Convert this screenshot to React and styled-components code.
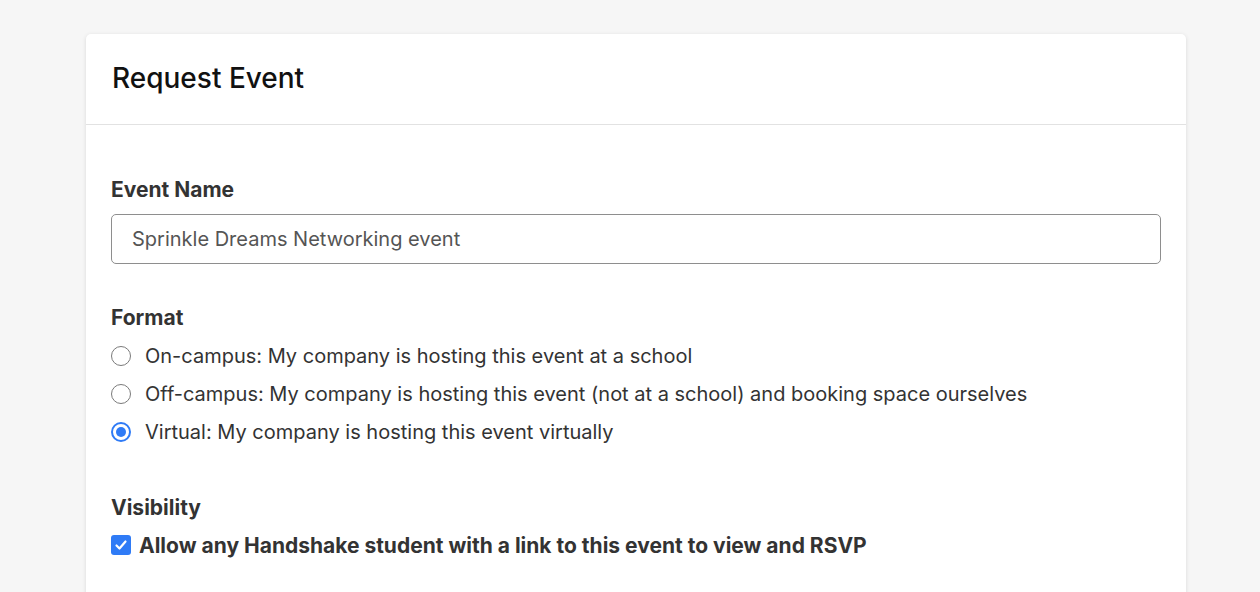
import React from "react";
import styled, { createGlobalStyle } from "styled-components";

const GlobalStyle = createGlobalStyle`
  body {
    margin: 0;
    background: #f6f6f6;
    font-family: Inter, "Noto Sans", sans-serif;
    color: #333;
  }
`;

const Page = styled.div`
  padding: 34px 74px 0 86px;
  min-height: 100vh;
  box-sizing: border-box;
`;

const Card = styled.div`
  width: 1100px;
  background: #fff;
  border-radius: 5px;
  box-shadow: 0 1px 4px rgba(0, 0, 0, 0.12);
  overflow: hidden;
`;

const Header = styled.div`
  height: 91px;
  display: flex;
  align-items: center;
  padding: 0 26px 2px;
  box-sizing: border-box;
  border-bottom: 1px solid #e2e2e2;
`;

const Title = styled.h1`
  margin: 0;
  font-size: 28px;
  font-weight: 500;
  color: #111;
`;

const Body = styled.div`
  padding: 53px 25px 40px;
  display: flex;
  flex-direction: column;
`;

const Field = styled.div`
  display: flex;
  flex-direction: column;
  margin-bottom: ${(p) => p.gap || 0}px;
`;

const Label = styled.div`
  font-size: 21px;
  line-height: 24px;
  font-weight: 700;
  color: #333;
  margin-bottom: ${(p) => p.space || 0}px;
`;

const TextInput = styled.input`
  height: 50px;
  box-sizing: border-box;
  border: 1px solid #8e8e8e;
  border-radius: 5px;
  padding: 0 20px;
  font-family: inherit;
  font-size: 20px;
  color: #555;
  outline: none;
`;

const OptionRow = styled.label`
  display: flex;
  align-items: center;
  height: 38px;
  font-size: 20px;
  color: #333;
`;

const RadioDot = styled.span`
  width: 20px;
  height: 20px;
  box-sizing: border-box;
  border-radius: 50%;
  border: ${(p) => (p.checked ? "2px solid #2f7bf6" : "1.5px solid #7a7a7a")};
  margin-right: 14px;
  display: flex;
  align-items: center;
  justify-content: center;
  &::after {
    content: "";
    width: 10px;
    height: 10px;
    border-radius: 50%;
    background: ${(p) => (p.checked ? "#2f7bf6" : "transparent")};
  }
`;

const CheckRow = styled.label`
  display: flex;
  align-items: center;
  height: 24px;
  margin-top: 13px;
  font-size: 21px;
  font-weight: 700;
  color: #333;
`;

const CheckBox = styled.span`
  width: 20px;
  height: 20px;
  border-radius: 3px;
  background: #2f7bf6;
  margin-right: 8px;
  display: flex;
  align-items: center;
  justify-content: center;
`;

const formats = [
  { label: "On-campus: My company is hosting this event at a school", checked: false },
  {
    label:
      "Off-campus: My company is hosting this event (not at a school) and booking space ourselves",
    checked: false,
  },
  { label: "Virtual: My company is hosting this event virtually", checked: true },
];

export default function App() {
  return (
    <>
      <GlobalStyle />
      <Page>
        <Card>
          <Header>
            <Title>Request Event</Title>
          </Header>
          <Body>
            <Field gap={42}>
              <Label space={12}>Event Name</Label>
              <TextInput defaultValue="Sprinkle Dreams Networking event" />
            </Field>
            <Field gap={45}>
              <Label space={7}>Format</Label>
              {formats.map((f) => (
                <OptionRow key={f.label}>
                  <RadioDot checked={f.checked} />
                  {f.label}
                </OptionRow>
              ))}
            </Field>
            <Field>
              <Label>Visibility</Label>
              <CheckRow>
                <CheckBox>
                  <svg width="14" height="14" viewBox="0 0 14 14">
                    <path
                      d="M2.5 7.5 L5.5 10.5 L11.5 3.5"
                      fill="none"
                      stroke="#fff"
                      strokeWidth="2.2"
                      strokeLinecap="round"
                      strokeLinejoin="round"
                    />
                  </svg>
                </CheckBox>
                Allow any Handshake student with a link to this event to view and RSVP
              </CheckRow>
            </Field>
          </Body>
        </Card>
      </Page>
    </>
  );
}
